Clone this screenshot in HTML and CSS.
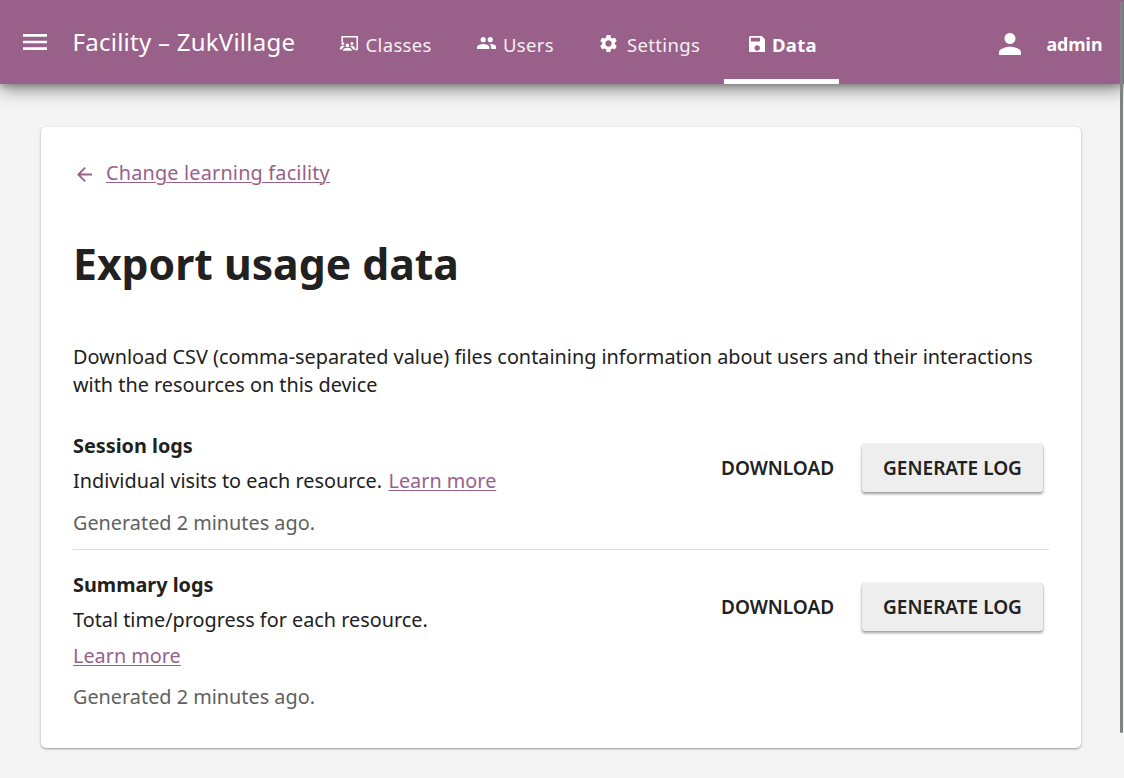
FILE: index.html
```html
<!DOCTYPE html>
<html lang="en">
<head>
<meta charset="utf-8">
<title>Facility – ZukVillage</title>
<link rel="stylesheet" href="styles.css">
</head>
<body>
<header class="appbar">
  <svg class="menu-icon" viewBox="0 0 24 16"><path d="M0 0h24v2.7H0zM0 6.7h24v2.6H0zM0 13.3h24V16H0z"/></svg>
  <span class="brand">Facility – ZukVillage</span>
  <nav class="tabs">
    <a class="tab tab-classes">
      <svg class="tab-icon" viewBox="0 0 20 20"><path d="M3.200 8V2.800h15v12.600h-2.200" fill="none" stroke="currentColor" stroke-width="1.500"/><circle cx="3.800" cy="9.500" r="1.500"/><circle cx="13" cy="9.500" r="1.500"/><circle cx="8.400" cy="11.400" r="1.800"/><path d="M.8 15.600c0-2.500 1-3.900 3-3.900 1 0 1.500.3 2 .8-1.700.7-2.500 1.700-2.700 3.100zM3.900 16.700c.2-2 1.900-2.900 4.500-2.900s4.300.9 4.500 2.900zM16 15.600c0-2.500-1-3.900-3-3.900-1 0-1.500.3-2 .8 1.700.7 2.500 1.700 2.700 3.100z"/></svg>
      <span>Classes</span>
    </a>
    <a class="tab tab-users">
      <svg class="tab-icon users-icon" viewBox="1 5 22 14"><path d="M16 11c1.660 0 2.990-1.340 2.990-3S17.660 5 16 5s-3 1.340-3 3 1.340 3 3 3zm-8 0c1.660 0 2.990-1.340 2.990-3S9.660 5 8 5 5 6.340 5 8s1.340 3 3 3zm0 2c-2.330 0-7 1.170-7 3.500V19h14v-2.500c0-2.330-4.670-3.500-7-3.500zm8 0c-.29 0-.62.02-.97.050 1.160.84 1.970 1.970 1.970 3.450V19h6v-2.500c0-2.330-4.670-3.500-7-3.500z"/></svg>
      <span>Users</span>
    </a>
    <a class="tab tab-settings">
      <svg class="tab-icon" viewBox="0 0 24 24"><path d="M19.140 12.940c.04-.3.060-.61.060-.94 0-.32-.02-.64-.07-.94l2.030-1.580c.18-.14.230-.41.120-.61l-1.920-3.320c-.12-.22-.37-.29-.59-.22l-2.390.96c-.5-.38-1.030-.7-1.620-.94l-.36-2.540c-.04-.24-.24-.41-.48-.41h-3.840c-.24 0-.43.170-.47.410l-.36 2.540c-.59.240-1.130.57-1.620.94l-2.390-.96c-.22-.08-.47 0-.59.220L2.740 8.870c-.12.210-.08.470.12.610l2.030 1.580c-.05.300-.09.630-.09.940s.02.640.07.940l-2.030 1.580c-.18.140-.23.410-.12.610l1.920 3.320c.12.220.37.290.59.220l2.390-.96c.5.380 1.030.7 1.620.94l.36 2.540c.05.240.24.410.48.410h3.840c.24 0 .44-.17.470-.41l.36-2.540c.59-.24 1.130-.56 1.620-.94l2.390.96c.22.080.47 0 .59-.22l1.920-3.320c.12-.22.070-.47-.12-.61l-2.010-1.580zM12 15.600c-1.980 0-3.600-1.620-3.600-3.600s1.620-3.600 3.600-3.600 3.600 1.620 3.600 3.600-1.620 3.600-3.600 3.600z"/></svg>
      <span>Settings</span>
    </a>
    <a class="tab tab-data">
      <svg class="tab-icon" viewBox="3 3 18 18"><path d="M17 3H5c-1.110 0-2 .9-2 2v14c0 1.100.89 2 2 2h14c1.100 0 2-.9 2-2V7l-4-4zm-5 16c-1.660 0-3-1.340-3-3s1.340-3 3-3 3 1.340 3 3-1.340 3-3 3zm3-10H5V5h10v4z"/></svg>
      <span>Data</span>
    </a>
  </nav>
  <div class="account">
    <svg class="person-icon" viewBox="4 4 16 16"><path d="M12 12c2.210 0 4-1.790 4-4s-1.790-4-4-4-4 1.790-4 4 1.790 4 4 4zm0 2c-2.670 0-8 1.340-8 4v2h16v-2c0-2.660-5.330-4-8-4z"/></svg>
    <span>admin</span>
  </div>
</header>
<main class="card">
  <div class="back">
    <svg class="back-icon" viewBox="4 4 16 16"><path d="M20 11H7.830l5.590-5.590L12 4l-8 8 8 8 1.410-1.410L7.830 13H20v-2z"/></svg>
    <a class="link">Change learning facility</a>
  </div>
  <h1 class="title">Export usage data</h1>
  <p class="intro">Download CSV (comma-separated value) files containing information about users and their interactions with the resources on this device</p>
  <section class="log log-session">
    <div class="log-text">
      <h2 class="log-name">Session logs</h2>
      <p class="log-desc"><span class="desc-text">Individual visits to each resource.</span><a class="link">Learn more</a></p>
      <p class="log-time">Generated 2 minutes ago.</p>
    </div>
    <div class="actions">
      <button class="btn btn-flat">DOWNLOAD</button>
      <button class="btn btn-raised">GENERATE LOG</button>
    </div>
  </section>
  <section class="log log-summary">
    <div class="log-text">
      <h2 class="log-name">Summary logs</h2>
      <p class="log-desc">Total time/progress for each resource.</p>
      <p class="log-more"><a class="link">Learn more</a></p>
      <p class="log-time">Generated 2 minutes ago.</p>
    </div>
    <div class="actions">
      <button class="btn btn-flat">DOWNLOAD</button>
      <button class="btn btn-raised">GENERATE LOG</button>
    </div>
  </section>
</main>
<div class="scroll-thumb"></div>
</body>
</html>
```

FILE: styles.css
```css
* { box-sizing: border-box; }
body {
  margin: 0;
  height: 778px;
  overflow: hidden;
  background: #f4f4f4;
  color: #212121;
  font-family: "Noto Sans", sans-serif;
  font-size: 19.84px;
  line-height: 28px;
}
h1, h2, p { margin: 0; }
svg { display: block; flex: none; fill: currentColor; }

.appbar {
  display: flex;
  align-items: flex-start;
  height: 84px;
  padding-left: 23px;
  background: #996189;
  color: #fff;
  box-shadow: 0 6px 16px rgba(0, 0, 0, .42), 0 2px 6px rgba(0, 0, 0, .2);
}
.menu-icon { width: 24px; height: 16px; margin-top: 34px; }
.brand {
  width: 268px;
  margin-top: 26px;
  padding-left: 25.5px;
  font-size: 24px;
  line-height: 32px;
  letter-spacing: .25px;
  white-space: nowrap;
}
.tabs { display: flex; height: 84px; }
.tab {
  display: flex;
  height: 84px;
  padding: 31px 23px 0;
  border-bottom: 5px solid transparent;
  font-size: 18.5px;
  letter-spacing: .35px;
  color: #f5eff3;
}
.tab-icon { width: 20px; height: 20px; margin: 3px 7px 0 0; color: #fff; }
.tab-classes { width: 138px; padding-left: 23.5px; }
.tab-users { width: 123px; }
.users-icon { width: 19.5px; height: 12.4px; margin: 6px 7px 0 .5px; }
.tab-settings { width: 148px; }
.tab-settings .tab-icon { width: 21px; height: 21px; margin: 2px 8px 0 -1px; }
.tab-data { width: 115px; padding-left: 24.5px; border-color: #fff; color: #fff; font-weight: 700; letter-spacing: .3px; }
.tab-data .tab-icon { width: 16.5px; height: 16.5px; margin: 4.5px 7px 0 0; }
.account {
  display: flex;
  margin-left: auto;
  padding: 30px 21.5px 0 0;
  font-size: 17.8px;
  font-weight: 700;
}
.person-icon { width: 22px; height: 22px; margin: 3px 25px 0 0; }

.card {
  width: 1040px;
  height: 621px;
  margin: 43px 0 0 41px;
  padding: 32px;
  background: #fff;
  border-radius: 5px;
  box-shadow: 0 1px 3px rgba(0, 0, 0, .28), 0 1px 1px rgba(0, 0, 0, .14);
}
.link {
  color: #996189;
  text-decoration: underline;
  text-decoration-thickness: 1px;
  text-underline-offset: 2px;
}
.back { display: flex; align-items: center; height: 28px; letter-spacing: .19px; }
.back-icon { width: 15px; height: 15px; margin: 2px 14.5px 0 3.5px; color: #996189; }
.title { margin-top: 48px; font-size: 42.7px; line-height: 58px; font-weight: 700; }
.intro { margin-top: 50px; }
.log { display: flex; justify-content: space-between; }
.log-session {
  width: 976px;
  height: 118px;
  margin-top: 33px;
  border-bottom: 1px solid #dedede;
}
.log-summary { margin-top: 21px; }
.log-name { font-size: 19.84px; line-height: 28px; font-weight: 700; }
.log-desc { margin-top: 7px; }
.desc-text { margin-right: 6.5px; }
.log-more { margin-top: 8px; }
.log-time { margin-top: 14px; color: #616161; }
.log-summary .log-time { margin-top: 13px; }
.actions { display: flex; padding: 12px 6px 0 0; }
.btn {
  height: 48px;
  padding: 0;
  border: 0;
  border-radius: 3px;
  background: none;
  color: #212121;
  font: 600 19px/48px "Noto Sans", sans-serif;
}
.btn-flat { width: 113px; margin-right: 28px; }
.btn-raised {
  width: 181px;
  background: #eee;
  box-shadow: 0 0 2px rgba(0, 0, 0, .14), 0 2px 3px rgba(0, 0, 0, .38);
}
.scroll-thumb {
  position: absolute;
  top: 1px;
  left: 1120px;
  width: 3px;
  height: 732px;
  border-radius: 2px;
  background: #7e8482;
}
```
